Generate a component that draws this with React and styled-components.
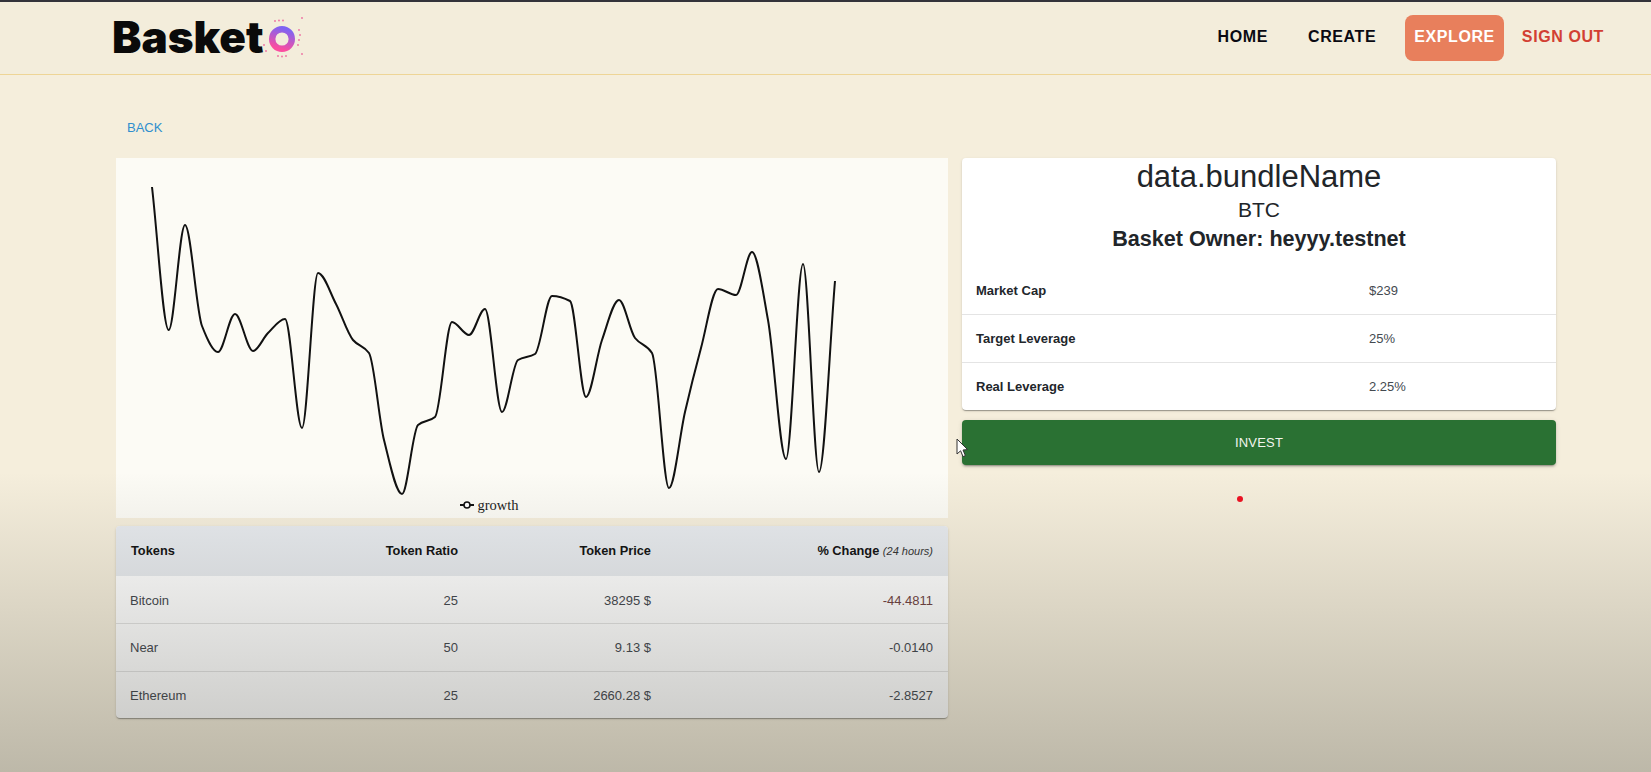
import React from 'react';
import styled, { createGlobalStyle } from 'styled-components';

const GlobalStyle = createGlobalStyle`
  html, body {
    margin: 0;
    padding: 0;
    height: 100%;
    overflow: hidden;
    background: #f5eedc;
    font-family: "Liberation Sans", Arial, sans-serif;
  }
`;

const Page = styled.div`
  position: relative;
  height: 772px;
  overflow: hidden;
  background: #f5eedc;
  border-top: 2px solid #33333a;
  box-sizing: border-box;
`;
// the screenshot darkens towards the bottom, over the cards too
const BottomFade = styled.div`
  position: absolute;
  left: 0;
  right: 0;
  bottom: 0;
  height: 300px;
  pointer-events: none;
  background: linear-gradient(to bottom, rgba(60, 60, 50, 0), rgba(60, 60, 50, 0.3));
`;
const Header = styled.header`
  display: flex;
  justify-content: space-between;
  align-items: center;
  height: 72px;
  padding: 0 47px 0 112px;
  background: #f3eddb;
  border-bottom: 1px solid #eed596;
`;
const Logo = styled.div`
  display: flex;
  align-items: center;
  padding-bottom: 3px;
  font-family: Inter, "Liberation Sans", sans-serif;
  font-size: 44px;
  font-weight: 900;
  color: #0a0a0a;
  & > svg {
    margin-left: -11px;
    margin-top: 5px;
  }
`;
const Nav = styled.nav`
  display: flex;
  align-items: center;
  padding-bottom: 1px;
`;
const NavLink = styled.a`
  box-sizing: border-box;
  height: 46px;
  font-size: 16px;
  font-weight: 700;
  letter-spacing: 0.6px;
  line-height: 44px;
  padding: 0 ${props => props.$pad || 0}px;
  margin-left: ${props => props.$gap || 0}px;
  color: ${props => props.$color || '#0a0a12'};
  background: ${props => props.$fill || 'transparent'};
  border-radius: 8px;
`;
const Content = styled.main`
  padding: 0 95px 0 116px;
`;
const BackLink = styled.a`
  display: block;
  padding: 44px 0 0 11px;
  height: 39px;
  font-size: 13px;
  line-height: 18px;
  color: #2f8fce;
`;
const Columns = styled.div`
  display: grid;
  grid-template-columns: 832px 594px;
  gap: 14px;
`;
const LeftColumn = styled.div`
  display: flex;
  flex-direction: column;
  gap: 8px;
`;
const RightColumn = styled.div`
  display: flex;
  flex-direction: column;
  gap: 10px;
`;
const ChartCard = styled.section`
  height: 360px;
  background: #fcfbf5;
  & > svg {
    display: block;
  }
`;
const Legend = styled.div`
  display: flex;
  justify-content: center;
  align-items: center;
  gap: 3px;
  width: 747px;
  height: 20px;
  font-family: "Liberation Serif", "Times New Roman", serif;
  font-size: 14.5px;
  color: #1a1a1a;
`;
const Card = styled.section`
  background: #fff;
  border-radius: 4px;
  overflow: hidden;
  box-shadow: 0 2px 1px -1px rgba(0, 0, 0, 0.2), 0 1px 1px 0 rgba(0, 0, 0, 0.14), 0 1px 3px 0 rgba(0, 0, 0, 0.12);
`;
const Table = styled.table`
  width: 100%;
  table-layout: fixed;
  border-collapse: collapse;
  font-size: 13px;
`;
const HeadRow = styled.tr`
  height: 50px;
  background: #e8ebef;
`;
const HeadCell = styled.th`
  padding: 0 15px 2px 15px;
  font-size: 12.8px;
  font-weight: 700;
  color: #111;
  text-align: ${props => props.$left ? 'left' : 'right'};
`;
const Hours = styled.em`
  font-size: 11px;
  font-weight: 400;
  color: #333;
`;
const Row = styled.tr`
  height: 47.5px;
  border-top: ${props => props.$first ? 'none' : '1px solid #e2e2e2'};
  &:last-child {
    height: 46.5px;
  }
`;
const Cell = styled.td`
  padding: 1px 15px 0 14px;
  color: ${props => props.$color || '#3f454c'};
  text-align: ${props => props.$left ? 'left' : 'right'};
`;
const Titles = styled.div`
  padding-bottom: 14px;
  text-align: center;
  color: #212529;
`;
const BundleName = styled.h2`
  margin: 0;
  font-size: 31px;
  font-weight: 400;
  line-height: 38px;
`;
const Symbol = styled.div`
  font-size: 21px;
  line-height: 28px;
`;
const Owner = styled.div`
  padding-top: 1px;
  font-size: 21.6px;
  font-weight: 700;
  line-height: 28px;
`;
const InfoRow = styled.div`
  display: grid;
  grid-template-columns: 407px 1fr;
  align-items: center;
  height: ${props => props.$last ? 47 : 48}px;
  padding-left: 14px;
  box-sizing: border-box;
  font-size: 13px;
  border-bottom: ${props => props.$last ? 'none' : '1px solid #e4e4e4'};
`;
const InfoLabel = styled.span`
  font-weight: 700;
  color: #22262b;
`;
const InfoValue = styled.span`
  margin-left: -14px;
  color: #444a50;
`;
const InvestButton = styled.button`
  height: 45px;
  border: 0;
  border-radius: 4px;
  background: #2a7133;
  color: #f2f5ee;
  font-family: inherit;
  font-size: 13px;
  letter-spacing: 0.2px;
  box-shadow: 0 3px 1px -2px rgba(0, 0, 0, 0.2), 0 2px 2px 0 rgba(0, 0, 0, 0.14), 0 1px 5px 0 rgba(0, 0, 0, 0.12);
`;
const RedDot = styled.span`
  position: absolute;
  left: 1237px;
  top: 494px;
  width: 6px;
  height: 6px;
  border-radius: 50%;
  background: #ee1122;
`;
const Cursor = styled.svg`
  position: absolute;
  left: 956px;
  top: 436px;
`;

const growth = [
  [152, 187], [168.7, 330], [185, 225], [202, 326], [218, 352], [235, 314], [253, 351],
  [268, 333], [285, 319], [302, 428], [318, 273], [336, 304], [353, 340], [369, 353],
  [384, 440], [402, 494], [418, 425], [435, 417], [452, 322], [469, 335], [485, 309],
  [502, 412], [518, 360], [535, 354], [552, 296], [570, 301], [586, 397], [602, 340],
  [619, 300], [635, 338], [652, 353], [669, 488], [685, 412], [701, 348], [718, 289],
  [736, 295], [752, 252], [768, 320], [786, 459], [803, 264], [819, 472], [835, 281],
];

// monotone cubic through the points, like the chart library draws it
const monotonePath = pts => {
  const slopes = pts.slice(1).map((p, i) => (p[1] - pts[i][1]) / (p[0] - pts[i][0]));
  const tangents = pts.map((_, i) => {
    if (i === 0) return slopes[0];
    if (i === pts.length - 1) return slopes[i - 1];
    const a = slopes[i - 1];
    const b = slopes[i];
    if (a * b <= 0) return 0;
    return (2 * a * b) / (a + b);
  });
  let d = `M${pts[0][0]} ${pts[0][1]}`;
  for (let i = 0; i < pts.length - 1; i++) {
    const [x0, y0] = pts[i];
    const [x1, y1] = pts[i + 1];
    const h = (x1 - x0) / 3;
    d += `C${x0 + h} ${y0 + tangents[i] * h} ${x1 - h} ${y1 - tangents[i + 1] * h} ${x1} ${y1}`;
  }
  return d;
};

const sparks = [
  [23, 12], [27, 11.5], [31, 11.5], [47, 21], [48, 26], [47, 31], [46, 36],
  [26, 47], [30, 47.5], [34, 47], [12, 36], [14, 42], [50, 9], [50, 45],
];

const tokens = [
  { name: 'Bitcoin', ratio: 25, price: '38295 $', change: '-44.4811', tint: '#6e3f3f' },
  { name: 'Near', ratio: 50, price: '9.13 $', change: '-0.0140' },
  { name: 'Ethereum', ratio: 25, price: '2660.28 $', change: '-2.8527' },
];

const info = [
  { label: 'Market Cap', value: '$239' },
  { label: 'Target Leverage', value: '25%' },
  { label: 'Real Leverage', value: '2.25%' },
];

const Ring = () => (
  <svg width="60" height="60" viewBox="0 0 60 60">
    <defs>
      <linearGradient id="ringFill" x1="0.7" y1="0" x2="0.4" y2="1">
        <stop offset="0" stopColor="#7f63f2" />
        <stop offset="1" stopColor="#fb4ea0" />
      </linearGradient>
    </defs>
    {sparks.map(([x, y]) => (
      <circle key={`${x}-${y}`} cx={x} cy={y} r="0.9" fill="#ee6fa0" />
    ))}
    <circle cx="30" cy="30" r="9.8" fill="none" stroke="url(#ringFill)" strokeWidth="6.4" />
  </svg>
);

const App = () => (
  <Page>
    <GlobalStyle />
    <Header>
      <Logo>
        Basket
        <Ring />
      </Logo>
      <Nav>
        <NavLink>HOME</NavLink>
        <NavLink $gap={40}>CREATE</NavLink>
        <NavLink $gap={29} $pad={9} $fill="#e87f5c" $color="#fff">EXPLORE</NavLink>
        <NavLink $gap={18} $color="#d23f33">SIGN OUT</NavLink>
      </Nav>
    </Header>
    <Content>
      <BackLink>BACK</BackLink>
      <Columns>
        <LeftColumn>
          <ChartCard>
            <svg width="832" height="337" viewBox="116 158 832 337">
              <path d={monotonePath(growth)} fill="none" stroke="#111" strokeWidth="2" />
            </svg>
            <Legend>
              <svg width="14" height="10" viewBox="0 0 14 10">
                <line x1="0" y1="5" x2="14" y2="5" stroke="#111" strokeWidth="2" />
                <circle cx="7" cy="5" r="3" fill="#fff" stroke="#111" strokeWidth="1.6" />
              </svg>
              growth
            </Legend>
          </ChartCard>
          <Card>
            <Table>
              <colgroup>
                <col width="160" />
                <col width="197" />
                <col width="193" />
                <col width="282" />
              </colgroup>
              <thead>
                <HeadRow>
                  <HeadCell $left>Tokens</HeadCell>
                  <HeadCell>Token Ratio</HeadCell>
                  <HeadCell>Token Price</HeadCell>
                  <HeadCell>% Change <Hours>(24 hours)</Hours></HeadCell>
                </HeadRow>
              </thead>
              <tbody>
                {tokens.map((token, i) => (
                  <Row key={token.name} $first={i === 0}>
                    <Cell $left>{token.name}</Cell>
                    <Cell>{token.ratio}</Cell>
                    <Cell>{token.price}</Cell>
                    <Cell $color={token.tint}>{token.change}</Cell>
                  </Row>
                ))}
              </tbody>
            </Table>
          </Card>
        </LeftColumn>
        <RightColumn>
          <Card>
            <Titles>
              <BundleName>data.bundleName</BundleName>
              <Symbol>BTC</Symbol>
              <Owner>Basket Owner: heyyy.testnet</Owner>
            </Titles>
            {info.map((row, i) => (
              <InfoRow key={row.label} $last={i === info.length - 1}>
                <InfoLabel>{row.label}</InfoLabel>
                <InfoValue>{row.value}</InfoValue>
              </InfoRow>
            ))}
          </Card>
          <InvestButton>INVEST</InvestButton>
        </RightColumn>
      </Columns>
    </Content>
    <RedDot />
    <Cursor width="13" height="21" viewBox="0 0 13 21">
      <path d="M1 1 L1 16 L4.6 12.8 L7 18.6 L9.4 17.6 L7 12 L11.6 11.6 Z" fill="#fff" stroke="#333" strokeWidth="1" />
    </Cursor>
    <BottomFade />
  </Page>
);

export default App;
